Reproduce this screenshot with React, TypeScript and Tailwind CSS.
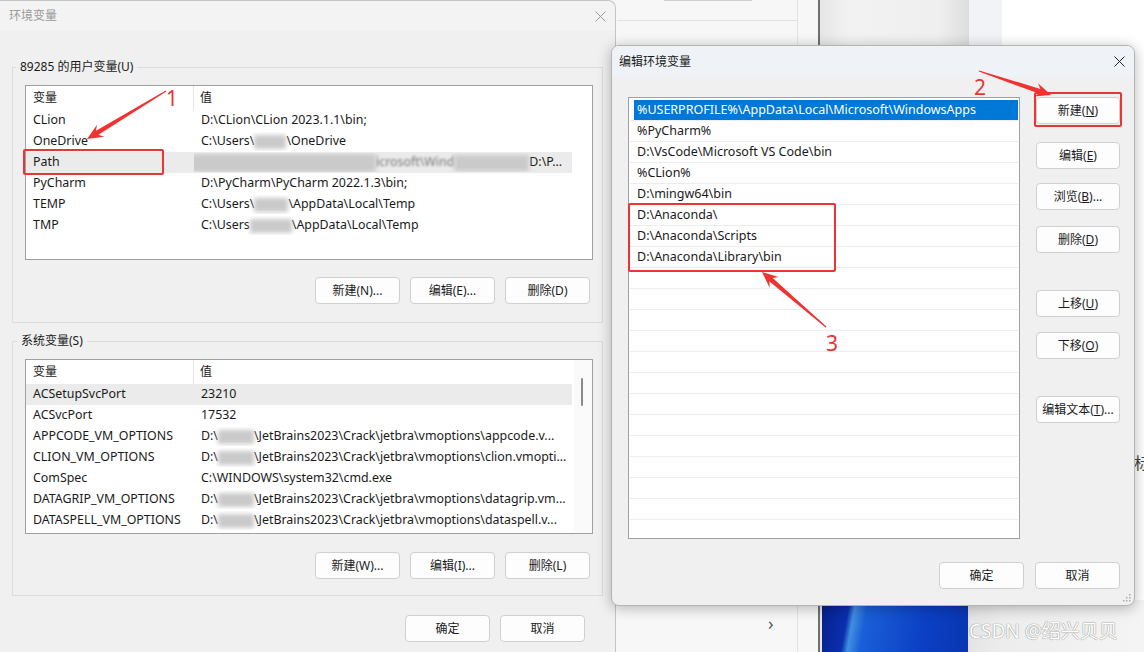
import React from 'react';

type Row = { name: string; value: React.ReactNode; hl?: boolean };

const Blur: React.FC<{ className: string }> = ({ className }) => (
  <span className={`inline-block h-[14px] bg-[#cacaca] align-middle blur-[2px] ${className}`} />
);

const Btn: React.FC<{ children: React.ReactNode; className?: string }> = ({ children, className = '' }) => (
  <div className={`flex h-[27px] items-center justify-center rounded-[4px] border border-[#d0d0d0] bg-[#fdfdfd] text-[12px] text-[#1b1b1b] ${className}`}>
    {children}
  </div>
);

const userRows: Row[] = [
  { name: 'CLion', value: 'D:\\CLion\\CLion 2023.1.1\\bin;' },
  { name: 'OneDrive', value: <>{'C:\\Users\\'}<Blur className="w-[32px]" />{'\\OneDrive'}</> },
  {
    name: 'Path',
    hl: true,
    value: (
      <>
        <Blur className="w-[185px] -ml-[10px] h-[18px] bg-[#c4c4c4]" />
        <span className="blur-[1px] text-[#777]">{'icrosoft\\Wind'}</span>
        <Blur className="w-[75px] h-[16px] bg-[#c0c0c0]" />
        {'D:\\P...'}
      </>
    ),
  },
  { name: 'PyCharm', value: 'D:\\PyCharm\\PyCharm 2022.1.3\\bin;' },
  { name: 'TEMP', value: <>{'C:\\Users\\'}<Blur className="w-[34px]" />{'\\AppData\\Local\\Temp'}</> },
  { name: 'TMP', value: <>{'C:\\Users'}<Blur className="w-[42px]" />{'\\AppData\\Local\\Temp'}</> },
];

const jb = (tail: string) => (
  <>
    {'D:\\'}
    <Blur className="w-[36px]" />
    {'\\JetBrains2023\\Crack\\jetbra\\vmoptions\\' + tail}
  </>
);

const sysRows: Row[] = [
  { name: 'ACSetupSvcPort', value: '23210', hl: true },
  { name: 'ACSvcPort', value: '17532' },
  { name: 'APPCODE_VM_OPTIONS', value: jb('appcode.v...') },
  { name: 'CLION_VM_OPTIONS', value: jb('clion.vmopti...') },
  { name: 'ComSpec', value: 'C:\\WINDOWS\\system32\\cmd.exe' },
  { name: 'DATAGRIP_VM_OPTIONS', value: jb('datagrip.vm...') },
  { name: 'DATASPELL_VM_OPTIONS', value: jb('dataspell.v...') },
];

const paths = [
  '%USERPROFILE%\\AppData\\Local\\Microsoft\\WindowsApps',
  '%PyCharm%',
  'D:\\VsCode\\Microsoft VS Code\\bin',
  '%CLion%',
  'D:\\mingw64\\bin',
  'D:\\Anaconda\\',
  'D:\\Anaconda\\Scripts',
  'D:\\Anaconda\\Library\\bin',
];

function ListView({ rows, scroll }: { rows: Row[]; scroll?: boolean }) {
  return (
    <div className="relative h-[175px] overflow-hidden border border-[#a0a0a0] bg-white text-[12.4px] text-[#1a1a1a]">
      <div className="flex h-[24px] items-center text-[12px]">
        <div className="flex h-full w-[168px] items-center border-r border-[#e5e5e5] pl-[7px]">变量</div>
        <div className="pl-[6px]">值</div>
      </div>
      {rows.map((r) => (
        <div key={r.name} className={`flex h-[21px] w-[546px] items-center ${r.hl ? 'bg-[#ebebeb]' : ''}`}>
          <div className="w-[168px] shrink-0 pl-[7px]">{r.name}</div>
          <div className="w-[378px] overflow-hidden whitespace-nowrap pl-[7px]">{r.value}</div>
        </div>
      ))}
      {scroll ? (
        <div className="absolute bottom-0 right-0 top-0 w-[18px] bg-[#fafafa]">
          <div className="ml-[7px] mt-[18px] h-[28px] w-[2px] rounded-full bg-[#8a8a8a]" />
        </div>
      ) : null}
    </div>
  );
}

function arrow(x1: number, y1: number, x2: number, y2: number) {
  const dx = x2 - x1;
  const dy = y2 - y1;
  const L = Math.hypot(dx, dy);
  const ux = dx / L;
  const uy = dy / L;
  const px = -uy;
  const py = ux;
  const hl = 16;
  const hw = 7;
  const nw = 2.4;
  const tw = 0.6;
  const nx = x2 - ux * hl;
  const ny = y2 - uy * hl;
  const kx = x2 - ux * (hl - 4);
  const ky = y2 - uy * (hl - 4);
  const pts = [
    [x1 + px * tw, y1 + py * tw],
    [kx + px * nw, ky + py * nw],
    [nx + px * hw, ny + py * hw],
    [x2, y2],
    [nx - px * hw, ny - py * hw],
    [kx - px * nw, ky - py * nw],
    [x1 - px * tw, y1 - py * tw],
  ];
  return pts.map((p) => p.map((v) => v.toFixed(1)).join(',')).join(' ');
}

const CloseX = ({ color }: { color: string }) => (
  <svg width="11" height="11" viewBox="0 0 11 11">
    <path d="M0.5 0.5L10.5 10.5M10.5 0.5L0.5 10.5" stroke={color} strokeWidth="1" />
  </svg>
);

export default function App() {
  return (
    <div className="relative h-[652px] w-[1144px] overflow-hidden bg-[#f4f4f4] font-['Noto_Sans','Noto_Sans_CJK_SC',sans-serif]">
      {/* background windows */}
      <div className="absolute left-[615px] top-0 h-[652px] w-[203px] bg-[#f7f7f7]">
        <div className="ml-[2px] mt-[20px] h-px w-[180px] bg-[#e2e2e2]" />
        <div className="absolute left-[49px] top-0 h-px w-[88px] bg-[#cfcfcf]" />
        <div className="absolute right-[20px] top-0 h-full w-px bg-[#e3e3e3]" />
        <span className="absolute left-[153px] top-[610px] text-[18px] text-[#555]">›</span>
      </div>
      <div className="absolute left-[818px] top-0 h-[652px] w-[2px] bg-[#707070]" />
      <div className="absolute left-[820px] top-0 h-[652px] w-[148px] bg-[linear-gradient(90deg,#e6e6e6,#f2f2f2_20%,#efefef_80%,#dedede)]" />
      <div className="absolute left-[822px] top-[600px] h-[52px] w-[146px] bg-[linear-gradient(100deg,#06208a_0%,#0a2fb0_18%,#3f8fe0_22%,#1a5fd8_30%,#0b3fc4_70%,#0a36b0_100%)]" />
      <div className="absolute left-[968px] top-0 h-[652px] w-[34px] border-l border-[#dcdcdc] bg-[#f1f3f6]" />
      <div className="absolute left-[1002px] top-0 h-[652px] w-[142px] bg-white" />
      <div className="absolute left-[968px] top-[600px] h-[52px] w-[176px] bg-[linear-gradient(90deg,#e4e4e4,#ededed_20%,#f4f4f4)]" />
      <span className="absolute left-[1134px] top-[451px] text-[16px] text-[#444]">标</span>
      <span className="absolute left-[969px] top-[618px] text-[19px] leading-[26px] text-white [text-shadow:0_0_1px_#8a8a8a,0_0_1px_#8a8a8a]">
        CSDN @绍兴贝贝
      </span>

      {/* left dialog: 环境变量 */}
      <div className="absolute left-0 top-0 h-[700px] w-[616px] rounded-tr-[8px] border-r border-t border-[#c4c4c4] bg-[#f0f0f0]">
        <div className="flex h-[30px] items-center justify-between rounded-tr-[8px] bg-[#f3f3f3] pl-[9px] pr-[9px]">
          <span className="text-[12px] text-[#9a9a9a]">环境变量</span>
          <CloseX color="#9a9a9a" />
        </div>
        <div className="pl-[12px] pr-[12px] pt-[28px]">
          <fieldset className="border border-[#dcdcdc]">
            <legend className="ml-[3px] px-[4px] text-[12px] leading-[16px] text-[#1a1a1a]">89285 的用户变量(U)</legend>
            <div className="pb-[18px] pl-[12px] pr-[9px] pt-[10px]">
              <ListView rows={userRows} />
              <div className="mt-[17px] flex justify-end gap-[10px] pr-[3px]">
                <Btn className="w-[85px]">新建(N)...</Btn>
                <Btn className="w-[85px]">编辑(E)...</Btn>
                <Btn className="w-[85px]">删除(D)</Btn>
              </div>
            </div>
          </fieldset>
          <fieldset className="mt-[10px] border border-[#dcdcdc]">
            <legend className="ml-[4px] px-[4px] text-[12px] leading-[16px] text-[#1a1a1a]">系统变量(S)</legend>
            <div className="pb-[16px] pl-[12px] pr-[9px] pt-[10px]">
              <ListView rows={sysRows} scroll />
              <div className="mt-[18px] flex justify-end gap-[10px] pr-[3px]">
                <Btn className="w-[85px]">新建(W)...</Btn>
                <Btn className="w-[85px]">编辑(I)...</Btn>
                <Btn className="w-[85px]">删除(L)</Btn>
              </div>
            </div>
          </fieldset>
          <div className="mt-[19px] flex justify-end gap-[10px] pr-[18px]">
            <Btn className="w-[85px]">确定</Btn>
            <Btn className="w-[85px]">取消</Btn>
          </div>
        </div>
      </div>

      {/* right dialog: 编辑环境变量 */}
      <div className="absolute left-[611px] top-[45px] flex h-[561px] w-[524px] flex-col overflow-hidden rounded-[8px] border border-[#b4b4b4] bg-[#f0f0f0] shadow-[0_2px_14px_rgba(0,0,0,0.28)]">
        <div className="flex h-[31px] shrink-0 items-center justify-between bg-[#eff3f8] pl-[7px] pr-[9px]">
          <span className="text-[12px] text-[#1a1a1a]">编辑环境变量</span>
          <CloseX color="#222" />
        </div>
        <div className="flex pl-[16px] pt-[20px]">
          <div className="h-[442px] w-[392px] overflow-hidden border border-[#a0a0a0] bg-white px-px pt-[2px] text-[12.5px] text-[#1a1a1a]">
            {Array.from({ length: 21 }).map((_, i) => (
              <div key={i} className="h-[21px] border-b border-[#ececec]">
                {i === 0 ? (
                  <div className="ml-[4px] flex h-full items-center bg-[#0078d7] pl-[3px] text-white">{paths[0]}</div>
                ) : (
                  <div className="flex h-full items-center pl-[7px]">{paths[i] ?? ''}</div>
                )}
              </div>
            ))}
          </div>
          <div className="ml-[16px] flex w-[84px] flex-col">
            <Btn>
              新建(<span className="underline">N</span>)
            </Btn>
            <Btn className="mt-[18px]">
              编辑(<span className="underline">E</span>)
            </Btn>
            <Btn className="mt-[14px]">
              浏览(<span className="underline">B</span>)...
            </Btn>
            <Btn className="mt-[16px]">
              删除(<span className="underline">D</span>)
            </Btn>
            <Btn className="mt-[37px]">
              上移(<span className="underline">U</span>)
            </Btn>
            <Btn className="mt-[15px]">
              下移(<span className="underline">O</span>)
            </Btn>
            <Btn className="mt-[37px]">
              编辑文本(<span className="underline">T</span>)...
            </Btn>
          </div>
        </div>
        <div className="mt-[23px] flex justify-end gap-[11px] pr-[14px]">
          <Btn className="w-[85px] border-[#0067c0]">确定</Btn>
          <Btn className="w-[85px]">取消</Btn>
        </div>
        <svg className="absolute bottom-[3px] right-[3px]" width="8" height="8" viewBox="0 0 8 8">
          <rect x="6" y="0" width="1.5" height="1.5" fill="#aaa" />
          <rect x="3" y="3" width="1.5" height="1.5" fill="#aaa" />
          <rect x="6" y="3" width="1.5" height="1.5" fill="#aaa" />
          <rect x="0" y="6" width="1.5" height="1.5" fill="#aaa" />
          <rect x="3" y="6" width="1.5" height="1.5" fill="#aaa" />
          <rect x="6" y="6" width="1.5" height="1.5" fill="#aaa" />
        </svg>
      </div>

      {/* annotations */}
      <div className="absolute left-[23px] top-[149px] h-[26px] w-[141px] rounded-[2px] border-2 border-[#ee3333]" />
      <div className="absolute left-[1034px] top-[92px] h-[35px] w-[88px] rounded-[2px] border-2 border-[#ee3333]" />
      <div className="absolute left-[628px] top-[203px] h-[69px] w-[208px] rounded-[2px] border-2 border-[#ee3333]" />
      <svg className="pointer-events-none absolute left-0 top-0" width="1144" height="652">
        <polygon points={arrow(166, 91, 87, 139)} fill="#ee3333" />
        <polygon points={arrow(979, 71, 1051, 95)} fill="#ee3333" />
        <polygon points={arrow(826, 327, 762, 272)} fill="#ee3333" />
      </svg>
      <span className="absolute left-[166px] top-[86px] text-[21px] leading-[24px] text-[#ee3333]">1</span>
      <span className="absolute left-[974px] top-[75px] text-[21px] leading-[24px] text-[#ee3333]">2</span>
      <span className="absolute left-[826px] top-[331px] text-[21px] leading-[24px] text-[#ee3333]">3</span>
    </div>
  );
}
